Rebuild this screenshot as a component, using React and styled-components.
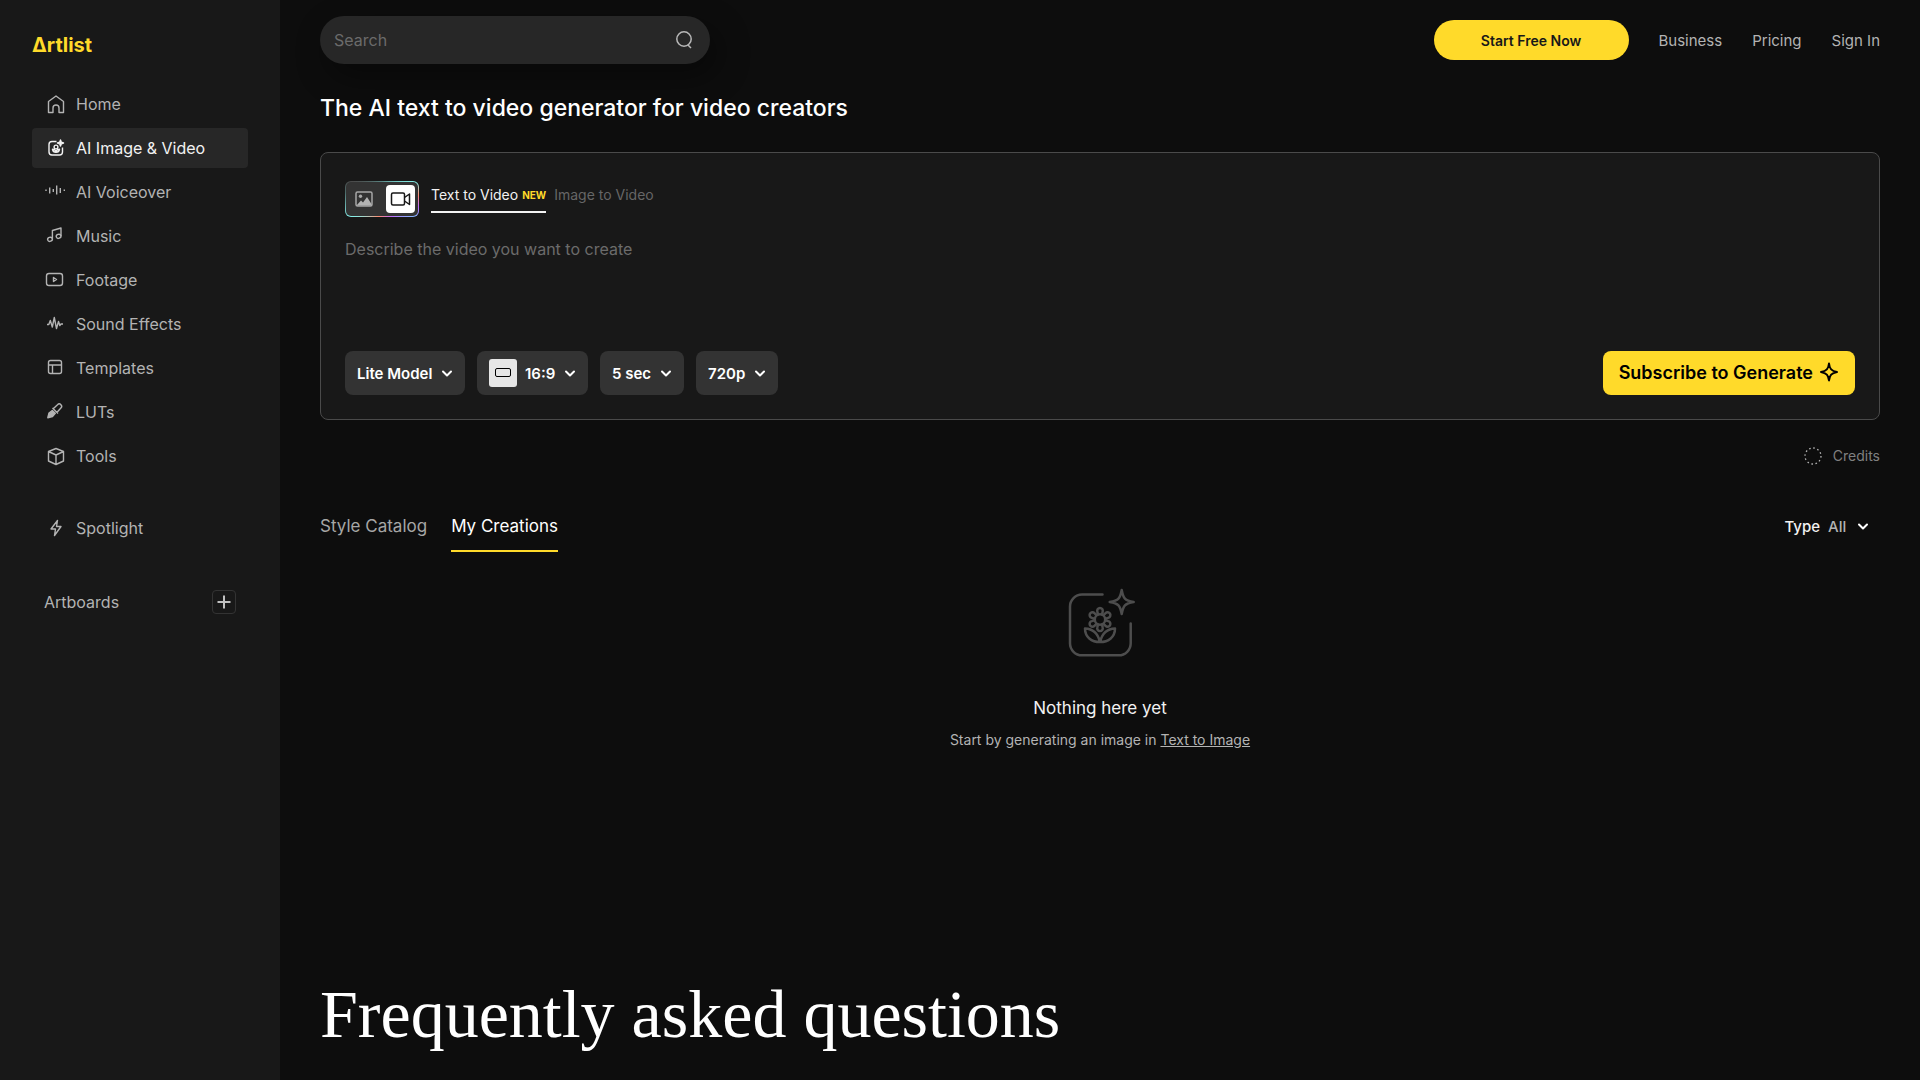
import React from "react";
import styled, { createGlobalStyle } from "styled-components";
import { useState } from "react";


function App(){
    const [busca, setBusca] = useState("");
    const [prompt, setPrompt] = useState("");

    return(
        <>
            <GlobalStyle />
            <Page>
                <Sidebar>
                    <Logo href="#">Δrtlist</Logo>
                    <NavList>
                        {links.map(link => (
                            <NavItem key={link.label} href="#" $active={link.active}>
                                <NavIcon viewBox="0 0 24 24">{link.icon}</NavIcon>
                                {link.label}
                            </NavItem>
                        ))}
                    </NavList>
                    <NavList>
                        <NavItem href="#">
                            <NavIcon viewBox="0 0 24 24"><path d="M13.500 4.500L7 13h4.500l-1 6.500L17 10.500h-4.500z" /></NavIcon>
                            Spotlight
                        </NavItem>
                    </NavList>
                    <Artboards>
                        Artboards
                        <button aria-label="New artboard">
                            <svg width="14" height="14" viewBox="0 0 14 14"><path d="M7 0.500v13M0.500 7h13" /></svg>
                        </button>
                    </Artboards>
                </Sidebar>

                <Main>
                    <Header>
                        <SearchBox>
                            <input type="text" aria-label="Search" placeholder="Search" value={busca} onChange={e => setBusca(e.target.value)} />
                            <svg width="20" height="20" viewBox="0 0 20 20"><circle cx="10" cy="9" r="7.200" /><path d="M14 15l3 3" /></svg>
                        </SearchBox>
                        <Menu>
                            <StartButton>Start Free Now</StartButton>
                            <a href="#">Business</a>
                            <a href="#">Pricing</a>
                            <a href="#">Sign In</a>
                        </Menu>
                    </Header>

                    <Title>The AI text to video generator for video creators</Title>

                    <Generator>
                        <TopRow>
                            <Toggle>
                                <ToggleButton aria-label="Image">
                                    <svg width="18" height="18" viewBox="0 0 18 18">
                                        <rect x="1" y="2" width="16" height="14" rx="1.500" fill="none" stroke="#a8a8a8" strokeWidth="1.500" />
                                        <circle cx="5.500" cy="6.200" r="1.700" fill="#a8a8a8" />
                                        <path d="M1.500 15.500l4.500-5 2 2 4-5.500L16.500 14v1.500z" fill="#b3b3b3" />
                                    </svg>
                                </ToggleButton>
                                <ToggleButton aria-label="Video" $active>
                                    <svg width="22" height="16" viewBox="0 0 22 16" fill="none" stroke="#181818" strokeWidth="1.500" strokeLinejoin="round">
                                        <rect x="1.500" y="2" width="13" height="12" rx="1.500" />
                                        <path d="M14.500 6.500l5-3.500v10.500l-5-3.500" />
                                    </svg>
                                </ToggleButton>
                            </Toggle>
                            <Modes>
                                <ModeTab $active>Text to Video <span>NEW</span></ModeTab>
                                <ModeTab>Image to Video</ModeTab>
                            </Modes>
                        </TopRow>
                        <Prompt aria-label="Prompt" placeholder="Describe the video you want to create" value={prompt} onChange={e => setPrompt(e.target.value)} />
                        <BottomRow>
                            <Option label="Model" value="Lite Model" />
                            <Option label="Aspect ratio" value="16:9" ratio />
                            <Option label="Duration" value="5 sec" />
                            <Option label="Resolution" value="720p" />
                            <SubscribeButton>
                                Subscribe to Generate
                                <svg width="20" height="20" viewBox="0 0 20 20"><path d="M10 1.500c.6 5.300 2.500 7.500 8 8.500-5.500 1-7.400 3.200-8 8.500-.6-5.300-2.500-7.500-8-8.500 5.500-1 7.400-3.200 8-8.500z" /></svg>
                            </SubscribeButton>
                        </BottomRow>
                    </Generator>

                    <Credits>
                        <svg width="20" height="20" viewBox="0 0 20 20"><circle cx="10" cy="10" r="8" /></svg>
                        Credits
                    </Credits>

                    <TabsRow>
                        <Tab>Style Catalog</Tab>
                        <Tab $active>My Creations</Tab>
                        <TypeFilter>
                            Type
                            <select><option>All</option></select>
                            <Chevron />
                        </TypeFilter>
                    </TabsRow>

                    <Empty>
                        <FlowerIcon />
                        <h2>Nothing here yet</h2>
                        <p>Start by generating an image in <a href="#">Text to Image</a></p>
                    </Empty>

                    <Faq>Frequently asked questions</Faq>
                </Main>
            </Page>
        </>
    )
}
export default App;

function Chevron(){
    return(
        <svg width="12" height="12" viewBox="0 0 12 12" fill="none" stroke="#ffffff" strokeWidth="2" strokeLinecap="round" strokeLinejoin="round">
            <path d="M2 4.500l4 4 4-4" />
        </svg>
    )
}

function Option({label, value, ratio}){
    return(
        <OptionBox>
            {ratio && (
                <RatioIcon>
                    <svg width="16" height="10" viewBox="0 0 16 10"><rect x="0.500" y="0.500" width="15" height="8" rx="1.500" fill="none" stroke="#000000" /></svg>
                </RatioIcon>
            )}
            <select aria-label={label}><option>{value}</option></select>
            <Chevron />
        </OptionBox>
    )
}

function FlowerIcon(){
    return(
        <svg width="72" height="76" viewBox="0 0 72 76" fill="none" stroke="#4d4d4d" strokeWidth="2.500" strokeLinecap="round" strokeLinejoin="round">
            <path d="M38.500 10.500H18a12 12 0 0 0-12 12v36.800a12 12 0 0 0 12 12h36.700a12 12 0 0 0 12-12V39.500" />
            <path d="M57.700 6c1.600 8.500 3 10.400 12 12-9 1.600-10.400 3.500-12 12-1.600-8.500-3-10.400-12-12 9-1.600 10.400-3.500 12-12z" />
            {[0, 60, 120, 180, 240, 300].map(angle => (
                <path key={angle} d="M34 30.500l-.7-3a2.800 2.800 0 1 1 5.400 0l-.7 3" transform={`rotate(${angle} 36 35.500)`} />
            ))}
            <circle cx="36" cy="35.500" r="5.200" />
            <path d="M36 58c-8.500 0-15-5-15-13.500 8 .2 13 5.500 15 13.500zM36 58c8.500 0 15-5 15-13.500-8 .2-13 5.500-15 13.500z" />
        </svg>
    )
}

const links = [
    { label: "Home", icon: <path d="M4.500 20.500V9.500L12 4l7.500 5.500v11h-4.500V16a3 3 0 0 0-6 0v4.500z" /> },
    { label: "AI Image & Video", active: true, icon: (
        <>
            <path d="M12.500 5.500H8a3 3 0 0 0-3 3V16a3 3 0 0 0 3 3h7.500a3 3 0 0 0 3-3v-4.500" />
            <path d="M16.500 4l.8 2.200 2.200.8-2.200.8-.8 2.200-.8-2.200-2.200-.8 2.200-.8z" fill="currentColor" />
            <circle cx="12" cy="11" r="1.900" />
            <path d="M8.500 13.300c.3 2 1.800 3 3.500 3s3.200-1 3.500-3c-1.700 0-2.800.7-3.500 2-.7-1.300-1.800-2-3.500-2z" />
        </>
    ) },
    { label: "AI Voiceover", icon: <path d="M2 9.500v1.500M5.700 7.500v6M9.300 9v3M12.700 5.500v9M16.300 8v5M20.300 9.500v1.500" /> },
    { label: "Music", icon: (
        <>
            <ellipse cx="6" cy="15.300" rx="2.400" ry="2" transform="rotate(-20 6 15.300)" />
            <ellipse cx="14.600" cy="12.300" rx="2.400" ry="2" transform="rotate(-20 14.600 12.300)" />
            <path d="M8.400 14.800V6.500L17 4v8" />
        </>
    ) },
    { label: "Footage", icon: (
        <>
            <rect x="2.500" y="5.500" width="16" height="12" rx="2.500" />
            <path d="M9.500 9.500v4l3-2z" />
        </>
    ) },
    { label: "Sound Effects", icon: <path d="M3 12.500h1.800l1.500-4 2 6.500 2-9.500 2.200 11 2-7 1.300 4 1.200-1.500h2" /> },
    { label: "Templates", icon: (
        <>
            <rect x="4.500" y="4.500" width="13" height="13" rx="2" />
            <path d="M4.500 9h13M8.500 9v8.500" />
        </>
    ) },
    { label: "LUTs", icon: (
        <>
            <path d="M9.500 8.500l4-3.800a2.200 2.200 0 0 1 3.400 3.400L13 12.200M8.500 8l5.500 5.500" />
            <path d="M8.300 10.500L5 13 3.800 17.700 8.500 16.500 11.300 13.300z" fill="currentColor" />
        </>
    ) },
    { label: "Tools", icon: <path d="M12 4.500l7.500 3v9.500L12 20.500 4.500 17V7.500zM4.500 7.500L12 11l7.500-3.500M12 11v9.500" /> },
];

const GlobalStyle = createGlobalStyle`
    *{
        box-sizing: border-box;
        margin: 0;
        padding: 0;
    }
    body{
        background: #0d0d0d;
        font-family: Inter, 'Liberation Sans', sans-serif;
        font-size: 16px;
        color: #ffffff;
    }
    a{
        color: inherit;
        text-decoration: none;
    }
    button, input, select, textarea{
        font: inherit;
        color: inherit;
        border: 0;
        background: none;
        outline: none;
    }
    button{
        cursor: pointer;
    }
    select{
        appearance: none;
    }
    svg{
        flex-shrink: 0;
    }
`

const Page = styled.div`
    display: flex;
    min-height: 100vh;
`

const Sidebar = styled.aside`
    width: 280px;
    flex-shrink: 0;
    padding: 28px 32px;
    background: #181818;
    color: #b3b3b3;
`

const Logo = styled.a`
    display: block;
    margin-bottom: 22px;
    font-size: 20px;
    font-weight: 700;
    line-height: 34px;
    color: #ffda2a;
`

const NavList = styled.nav`
    display: flex;
    flex-direction: column;
    gap: 4px;
    margin-bottom: 32px;
`

const NavItem = styled.a`
    display: flex;
    align-items: center;
    gap: 8px;
    height: 40px;
    padding: 0 12px;
    border-radius: 4px;
    background: ${props => props.$active ? "#272727" : "none"};
    color: ${props => props.$active ? "#f2f2f2" : "#b3b3b3"};
`

const NavIcon = styled.svg`
    width: 24px;
    height: 24px;
    fill: none;
    stroke: currentColor;
    stroke-width: 1.4;
    stroke-linejoin: round;
`

const Artboards = styled.div`
    display: flex;
    align-items: center;
    justify-content: space-between;
    height: 40px;
    margin-top: 34px;
    padding: 0 12px;
    button{
        display: flex;
        align-items: center;
        justify-content: center;
        width: 24px;
        height: 24px;
        border: 1px solid #333333;
        border-radius: 4px;
    }
    svg{
        stroke: #c0c0c0;
        stroke-width: 2;
    }
`

const Main = styled.main`
    flex: 1;
    min-width: 0;
    padding: 16px 40px 24px;
`

const Header = styled.header`
    display: flex;
    align-items: center;
    justify-content: space-between;
`

const SearchBox = styled.div`
    display: flex;
    align-items: center;
    width: 390px;
    height: 48px;
    padding: 0 16px 0 14px;
    border-radius: 24px;
    background: #272727;
    box-shadow: 8px 12px 32px rgba(0, 0, 0, 0.4);
    input{
        flex: 1;
        min-width: 0;
    }
    input::placeholder{
        color: #6b6b6b;
    }
    svg{
        fill: none;
        stroke: #b8b8b8;
        stroke-width: 1.5;
    }
`

const Menu = styled.nav`
    display: flex;
    align-items: center;
    gap: 30px;
    font-size: 15px;
    color: #b3b3b3;
`

const StartButton = styled.button`
    width: 195px;
    height: 40px;
    border-radius: 20px;
    background: #ffda2a;
    font-size: 14px;
    font-weight: 600;
    color: #181818;
`

const Title = styled.h1`
    margin: 28px 0;
    font-size: 23px;
    font-weight: 500;
    line-height: 32px;
`

const Generator = styled.section`
    padding: 28px 24px 24px;
    border: 1px solid #4a4a4a;
    border-radius: 8px;
    background: #181818;
`

const TopRow = styled.div`
    display: flex;
    align-items: flex-start;
    gap: 12px;
    height: 36px;
`

const Toggle = styled.div`
    display: flex;
    justify-content: space-between;
    width: 74px;
    height: 36px;
    padding: 3px;
    border: 1px solid transparent;
    border-radius: 6px;
    background:
        linear-gradient(#333333, #333333) padding-box,
        conic-gradient(from 0deg, #5a8886 0deg, #84f0ea 64deg, #ff8a70 84deg, #c06cff 102deg, #84b4ff 118deg, #c06cff 150deg, #ff8a70 190deg, #84f0ea 240deg, #4d6b6a 280deg, #4a4a4a 300deg, #5a8886 360deg) border-box;
`

const ToggleButton = styled.button`
    display: flex;
    align-items: center;
    justify-content: center;
    width: 29px;
    border-radius: 4px;
    background: ${props => props.$active ? "#ffffff" : "none"};
`

const Modes = styled.div`
    display: flex;
    gap: 8px;
`

const ModeTab = styled.button`
    height: 32px;
    padding-bottom: 4px;
    border-bottom: 2px solid ${props => props.$active ? "#f2f2f2" : "transparent"};
    font-size: 14px;
    color: ${props => props.$active ? "#f2f2f2" : "#666666"};
    span{
        font-size: 10px;
        font-weight: 700;
        color: #ffda2a;
        vertical-align: 1px;
    }
`

const Prompt = styled.textarea`
    display: block;
    width: 100%;
    height: 94px;
    margin: 20px 0;
    line-height: 24px;
    resize: none;
    &::placeholder{
        color: #6b6b6b;
    }
`

const BottomRow = styled.div`
    display: flex;
    gap: 12px;
`

const OptionBox = styled.div`
    display: flex;
    align-items: center;
    gap: 8px;
    height: 44px;
    padding: 0 12px;
    border-radius: 8px;
    background: #333333;
    font-size: 15px;
    font-weight: 600;
`

const RatioIcon = styled.span`
    display: flex;
    align-items: center;
    justify-content: center;
    width: 28px;
    height: 28px;
    border-radius: 3px;
    background: #e6e6e6;
`

const SubscribeButton = styled.button`
    display: flex;
    align-items: center;
    gap: 6px;
    height: 44px;
    margin-left: auto;
    padding: 0 16px 2px;
    border-radius: 8px;
    background: #ffda2a;
    font-size: 18px;
    font-weight: 600;
    color: #000000;
    svg{
        fill: none;
        stroke: #000000;
        stroke-width: 2;
        stroke-linejoin: round;
    }
`

const Credits = styled.div`
    display: flex;
    align-items: center;
    justify-content: flex-end;
    gap: 10px;
    margin-top: 26px;
    font-size: 14px;
    line-height: 20px;
    color: #808080;
    svg{
        fill: none;
        stroke: #b3b3b3;
        stroke-width: 1.3;
        stroke-dasharray: 1.6 2.589;
    }
`

const TabsRow = styled.div`
    display: flex;
    gap: 24px;
    margin-top: 46px;
`

const Tab = styled.button`
    height: 40px;
    padding-bottom: 10px;
    border-bottom: 2px solid ${props => props.$active ? "#ffda2a" : "transparent"};
    font-size: 17px;
    color: ${props => props.$active ? "#ffffff" : "#a6a6a6"};
`

const TypeFilter = styled.label`
    display: flex;
    align-items: center;
    gap: 8px;
    height: 28px;
    margin-left: auto;
    padding-right: 11px;
    font-size: 15px;
    font-weight: 500;
    color: #f2f2f2;
    select{
        margin-right: 2px;
        color: #b3b3b3;
    }
`

const Empty = styled.section`
    display: flex;
    flex-direction: column;
    align-items: center;
    margin-top: 32px;
    h2{
        margin-top: 36px;
        font-size: 17px;
        font-weight: 400;
        line-height: 24px;
        color: #f2f2f2;
    }
    p{
        margin-top: 10px;
        font-size: 14px;
        line-height: 20px;
        color: #b3b3b3;
    }
    a{
        text-decoration: underline;
    }
`

const Faq = styled.h2`
    margin-top: 224px;
    font-family: 'Liberation Serif', serif;
    font-size: 68px;
    font-weight: 400;
    line-height: 80px;
`
